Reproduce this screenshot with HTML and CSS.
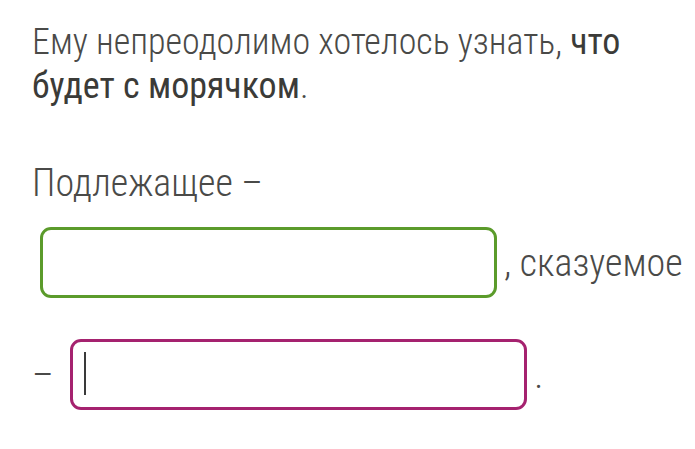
FILE: index.html
```html
<!DOCTYPE html>
<html lang="ru">
<head>
<meta charset="utf-8">
<title>Задание</title>
<link rel="stylesheet" href="styles.css">
</head>
<body>
<main class="task">
  <p class="sentence">Ему непреодолимо хотелось узнать, <b class="hl">что будет с морячком</b>.</p>
  <p class="answer">Подлежащее – <span class="field field-green"></span>, сказуемое – <span class="field field-pink"><span class="caret"></span></span>.</p>
</main>
</body>
</html>
```
FILE: styles.css
```css
html, body {
  margin: 0;
  padding: 0;
  background: #ffffff;
}
.task {
  padding: 20px 4px 0 32px;
  font-family: Roboto, "Liberation Sans", sans-serif;
  font-weight: 300;
  font-stretch: condensed;
  font-size: 38px;
  line-height: 44px;
  color: #4a4a48;
}
.sentence {
  margin: 0;
  padding-right: 18px;
  font-size: 36px;
}
.hl {
  font-weight: 400;
  color: #3b3b38;
}
.answer {
  margin: 53px 0 0 0;
}
.field {
  display: inline-block;
  box-sizing: border-box;
  width: 457px;
  height: 71px;
  margin: 22px 7px 19px 8px;
  border-radius: 11px;
  vertical-align: -41px;
  position: relative;
}
.field-green {
  border: 3.5px solid #5b9b2b;
}
.field-pink {
  border: 3.5px solid #a5226f;
}
.caret {
  position: absolute;
  left: 11px;
  top: 10px;
  width: 2px;
  height: 43px;
  background: #3a3a3a;
}
```
